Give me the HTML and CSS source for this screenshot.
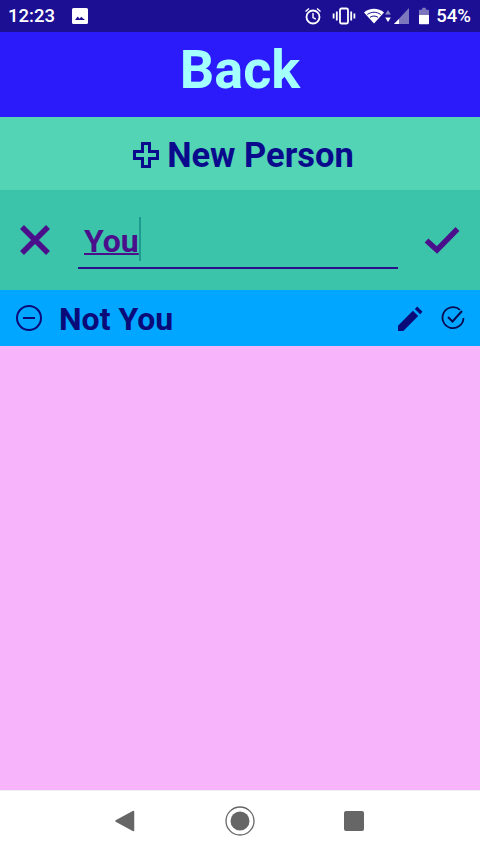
FILE: index.html
```html
<!DOCTYPE html>
<html lang="en">
<head>
    <meta charset="UTF-8">
    <meta name="viewport" content="width=device-width, initial-scale=1.0">
    <title>People</title>
    <link rel="stylesheet" href="styles.css">
</head>
<body>
    <div class="status-bar">
        <span class="clock">12:23</span>
        <svg class="icon-image" width="16" height="16" viewBox="0 0 16 16">
            <path fill="#fff" d="M1.500 0h13A1.500 1.500 0 0 1 16 1.500v13a1.500 1.500 0 0 1-1.500 1.500h-13A1.500 1.500 0 0 1 0 14.500v-13A1.500 1.500 0 0 1 1.500 0z"/>
            <path fill="#1c0f93" d="M3 12l2.700-3.500 1.900 2.300 1.600-2 3.800 3.200z"/>
        </svg>
        <span class="status-gap"></span>
        <svg width="20" height="20" viewBox="0 0 20 20" fill="none" stroke="#fff">
            <circle cx="10" cy="11" r="6.500" stroke-width="1.800"/>
            <path stroke-width="1.400" d="M10 7v4.500l2.800 1.600M2.500 5.500l3.500-3M17.500 5.500l-3.500-3"/>
        </svg>
        <svg class="icon-vibrate" width="24" height="20" viewBox="0 0 24 20" fill="none" stroke="#fff" stroke-width="1.800">
            <rect x="8" y="2.500" width="8" height="15" rx="1.500"/>
            <path d="M4.800 5.500v9M19.200 5.500v9M1.600 7.500v5M22.400 7.500v5"/>
        </svg>
        <svg class="icon-wifi" width="22" height="18" viewBox="0 0 22 18">
            <path fill="#fff" d="M0 5.500C5.500 .5 14.500 .5 20 5.500L10 16.500z"/>
            <path fill="none" stroke="#1c0f93" stroke-width="1" d="M3.300 7.500c4-3 9.400-3 13.400 0M6 10.300c2.500-1.700 5.500-1.700 8 0"/>
        </svg>
        <svg class="icon-updown" width="6" height="14" viewBox="0 0 6 14">
            <path fill="#8f8bc9" d="M3 1l2.800 4.500H.2z"/>
            <path fill="#fff" d="M3 13L.2 8.500h5.600z"/>
        </svg>
        <svg class="icon-signal" width="17" height="18" viewBox="0 0 17 18">
            <path fill="#7d78bd" d="M16 1v16H1z"/>
            <path fill="#fff" d="M1 17l5-5v5z"/>
        </svg>
        <svg class="icon-battery" width="10" height="18" viewBox="0 0 11 18">
            <path fill="#7d78bd" d="M3.500 0h4v2H10a1 1 0 0 1 1 1v5H0V3a1 1 0 0 1 1-1h2.500z"/>
            <path fill="#fff" d="M0 8h11v9a1 1 0 0 1-1 1H1a1 1 0 0 1-1-1z"/>
        </svg>
        <span class="battery-text">54%</span>
    </div>

    <div class="back-bar">Back</div>

    <div class="new-person">
        <svg width="28" height="28" viewBox="0 0 28 28">
            <path fill="none" stroke="#0a0a8c" stroke-width="3" d="M10.500 2.500h7v8h8v7h-8v8h-7v-8h-8v-7h8z"/>
        </svg>
        <span>New Person</span>
    </div>

    <div class="edit-row">
        <svg class="edit-cancel" width="32" height="32" viewBox="0 0 32 32">
            <path fill="none" stroke="#4b0f8c" stroke-width="5.500" d="M3 3l26 26M29 3L3 29"/>
        </svg>
        <div class="edit-field">
            <span class="edit-text">You</span><span class="caret"></span>
        </div>
        <svg class="edit-ok" width="36" height="28" viewBox="0 0 36 28">
            <path fill="none" stroke="#4b0f8c" stroke-width="5.500" d="M2.500 14.500l10.500 9.500L33.500 3"/>
        </svg>
    </div>

    <div class="person-row">
        <svg class="person-remove" width="28" height="28" viewBox="0 0 28 28" fill="none" stroke="#0a0a78" stroke-width="2">
            <circle cx="14" cy="14" r="12"/>
            <path d="M8 14h12"/>
        </svg>
        <span class="person-name">Not You</span>
        <svg class="person-edit" width="25" height="25" viewBox="0 0 26 26">
            <path fill="#0a0a78" d="M0 20.500L15.500 5l5.500 5.500L5.500 26H0zM17.500 3L20 .5l5.500 5.500L23 8.500z"/>
        </svg>
        <svg class="person-check" width="24" height="24" viewBox="0 0 24 24" fill="none" stroke="#0a0a50" stroke-width="1.800">
            <path d="M19 3.800A10.500 10.500 0 1 0 22.500 12"/>
            <path stroke-width="2" d="M7 11l4.500 4.500L21 5"/>
        </svg>
    </div>

    <div class="list-area"></div>

    <div class="nav-bar">
        <svg width="20" height="22" viewBox="0 0 20 22">
            <path fill="#666" stroke="#666" stroke-width="1.500" stroke-linejoin="round" d="M18.500 1.500v19L1 11z"/>
        </svg>
        <svg width="30" height="30" viewBox="0 0 30 30">
            <circle cx="15" cy="15" r="14" fill="none" stroke="#666" stroke-width="1.300"/>
            <circle cx="15" cy="15" r="9.500" fill="#666"/>
        </svg>
        <svg width="20" height="20" viewBox="0 0 20 20">
            <rect width="20" height="20" rx="2" fill="#666"/>
        </svg>
    </div>
</body>
</html>
```

FILE: styles.css
```css
body {
    margin: 0;
    width: 480px;
    height: 853px;
    display: flex;
    flex-direction: column;
    font-family: Roboto, "Liberation Sans", sans-serif;
    overflow: hidden;
}
svg {
    display: block;
    flex: none;
}
.status-bar {
    height: 32px;
    background-color: #1c0f93;
    color: white;
    display: flex;
    align-items: center;
    padding: 0 9px 0 8px;
    font-size: 18.5px;
    font-weight: 500;
}
.icon-image {
    margin-left: 17px;
}
.status-gap {
    flex: 1;
}
.icon-vibrate {
    margin-left: 9px;
}
.icon-wifi {
    margin-left: 8px;
}
.icon-updown {
    margin-left: -1px;
}
.icon-signal {
    margin-left: 2px;
}
.icon-battery {
    margin-left: 9px;
}
.battery-text {
    margin-left: 7px;
}
.back-bar {
    height: 85px;
    box-sizing: border-box;
    padding-bottom: 10px;
    background-color: #2b1bfb;
    color: #a4ffff;
    font-size: 54px;
    font-weight: 700;
    display: flex;
    align-items: center;
    justify-content: center;
}
.new-person {
    height: 73px;
    box-sizing: border-box;
    padding: 2px 0 0 6px;
    background-color: #53d4b4;
    color: #0a0a8c;
    font-size: 34.500px;
    font-weight: 700;
    display: flex;
    align-items: center;
    justify-content: center;
    gap: 7px;
}
.edit-row {
    height: 100px;
    background-color: #3cc4aa;
    display: flex;
    align-items: center;
}
.edit-cancel {
    margin-left: 19px;
}
.edit-field {
    width: 320px;
    height: 50px;
    margin-left: 27px;
    margin-top: 8px;
    box-sizing: border-box;
    border-bottom: 2px solid #2a108c;
    padding: 0 0 8px 6px;
    display: flex;
    align-items: center;
}
.edit-text {
    color: #4b0f8c;
    font-size: 32px;
    font-weight: 700;
    margin-top: 4px;
    text-decoration: underline;
    text-decoration-thickness: 2px;
}
.caret {
    width: 2px;
    height: 44px;
    background-color: #1f9a90;
}
.edit-ok {
    margin-left: 26px;
}
.person-row {
    height: 56px;
    background-color: #00a6ff;
    color: #0a0a78;
    display: flex;
    align-items: center;
}
.person-remove {
    margin-left: 15px;
}
.person-name {
    margin-left: 16px;
    padding-top: 2px;
    font-size: 32px;
    font-weight: 700;
    flex: 1;
}
.person-edit {
    margin-right: 18px;
}
.person-check {
    margin-right: 15px;
}
.list-area {
    flex: 1;
    background-color: #f8b4fb;
}
.nav-bar {
    height: 63px;
    box-sizing: border-box;
    padding: 0 116px 2px 115px;
    background-color: white;
    border-top: 1px solid #eee;
    display: flex;
    align-items: center;
    justify-content: space-between;
}
```
